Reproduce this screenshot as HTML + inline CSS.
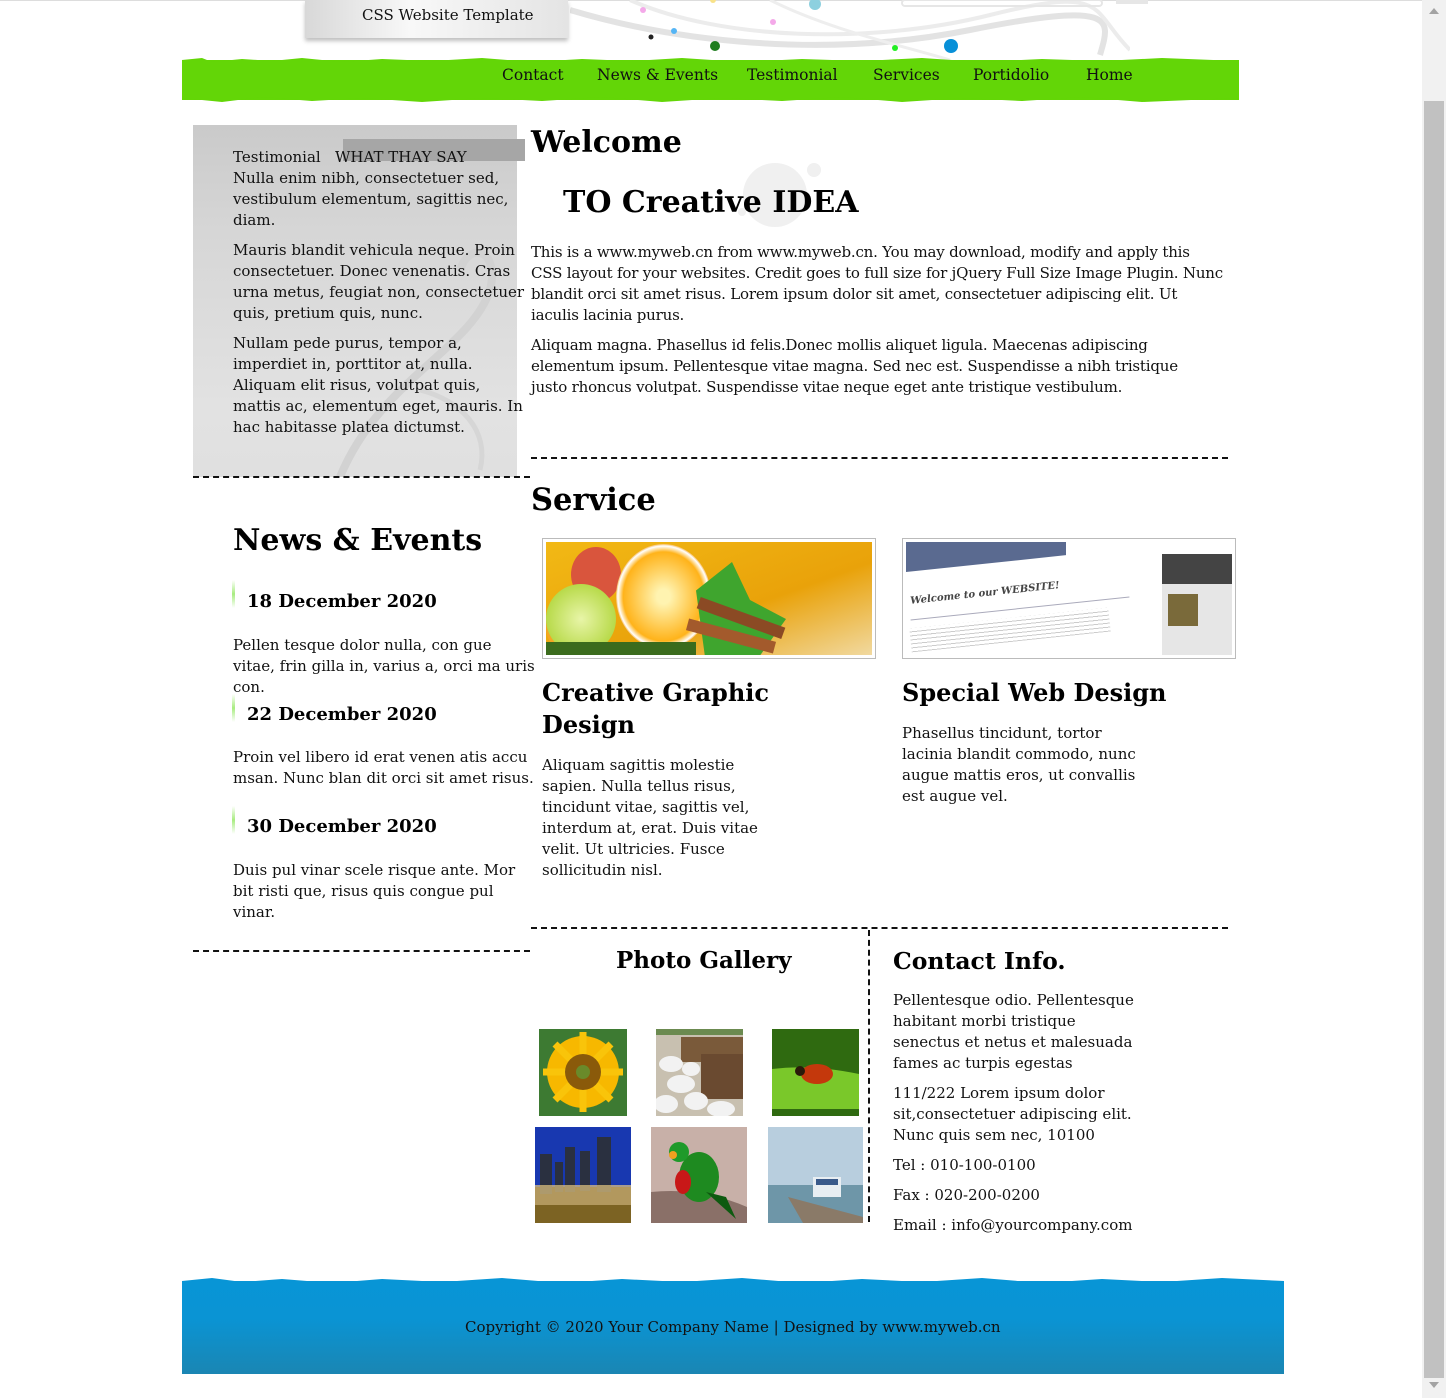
<!DOCTYPE html>
<html><head><meta charset="utf-8">
<style>
*{margin:0;padding:0;box-sizing:border-box}
html,body{width:1446px;height:1398px;overflow:hidden;background:#fff}
body{position:relative;font-family:"DejaVu Serif","Liberation Serif",serif;font-size:15px;line-height:21px;color:#111}
.a{position:absolute;white-space:nowrap}
.p{margin-bottom:9px}
h1,h2,h3{font-weight:bold;color:#000}
.dh{position:absolute;height:0;border-top:2px dashed #111}
.nav span{position:absolute;top:64px;font-size:15.5px;line-height:22px;color:#111}
</style></head><body>

<div class="a" style="left:0;top:0;width:1422px;height:1px;background:#ddd"></div>
<svg class="a" style="left:570px;top:0" width="560" height="60">
<path d="M0 10 C100 40 250 60 400 30 S540 20 530 55" stroke="#e3e3e3" stroke-width="6" fill="none"/>
<path d="M60 0 C150 40 300 45 420 15 S520 10 560 50" stroke="#ececec" stroke-width="4" fill="none"/>
<path d="M200 0 C260 30 330 45 380 60" stroke="#eee" stroke-width="3" fill="none"/>
<rect x="332" y="0" width="200" height="6" rx="3" fill="none" stroke="#e6e6e6" stroke-width="2"/>
<circle cx="73" cy="10" r="3" fill="#f4a9e9"/><circle cx="104" cy="31" r="3" fill="#55b5f5"/>
<circle cx="81" cy="37" r="2.5" fill="#222"/><circle cx="145" cy="46" r="5" fill="#1e7d1e"/>
<circle cx="203" cy="22" r="3" fill="#f4a9e9"/><circle cx="245" cy="4" r="6" fill="#8dd0df"/>
<circle cx="325" cy="48" r="3" fill="#22ee22"/><circle cx="381" cy="46" r="7" fill="#0890d8"/>
<circle cx="143" cy="0" r="3" fill="#f8e28a"/>
</svg>
<div class="a" style="left:1116px;top:0;width:32px;height:4px;background:#e6e6e6"></div>
<div class="a" style="left:305px;top:0;width:263px;height:38px;background:linear-gradient(90deg,#d8d8d8,#f8f8f8 40%,#e4e4e4);box-shadow:0 3px 4px rgba(0,0,0,.25)"></div>
<div class="a" style="left:362px;top:5px;font-size:15px;color:#111">CSS Website Template</div>

<div class="a" style="left:182px;top:60px;width:1057px;height:40px;background:#63d607"></div>
<svg class="a" style="left:182px;top:56px" width="1057" height="48">
<path d="M0 4 L20 2 L30 6 L60 3 L90 5 L120 2 L160 6 L200 3 L250 5 L300 2 L350 6 L400 3 L450 5 L500 2 L560 6 L620 3 L680 5 L740 2 L800 6 L860 3 L920 5 L980 2 L1057 5 L1057 6 L0 6Z" fill="#63d607"/>
<path d="M0 42 L40 46 L80 41 L130 45 L180 42 L240 46 L300 42 L360 45 L420 41 L480 46 L540 42 L600 45 L660 41 L720 46 L780 42 L840 45 L900 41 L960 46 L1057 42 L1057 40 L0 40Z" fill="#63d607"/>
</svg>
<div class="nav">
<span style="left:502px">Contact</span><span style="left:597px">News &amp; Events</span><span style="left:747px">Testimonial</span><span style="left:873px">Services</span><span style="left:973px">Portidolio</span><span style="left:1086px">Home</span>
</div>

<div class="a" style="left:193px;top:125px;width:324px;height:352px;background:linear-gradient(180deg,#cacaca 0,#d6d6d6 30%,#e2e2e2 80%,#e0e0e0)"></div>
<svg class="a" style="left:320px;top:230px" width="200" height="247"><path d="M20 247 C60 150 150 120 170 60 C180 20 150 10 140 40" stroke="#d2d2d2" stroke-width="8" fill="none"/><path d="M100 160 C140 170 170 200 160 240" stroke="#d6d6d6" stroke-width="5" fill="none"/></svg>
<div class="a" style="left:343px;top:139px;width:182px;height:22px;background:#a6a6a6"></div>
<div class="a" style="left:233px;top:147px">
<div>Testimonial&nbsp;&nbsp; WHAT THAY SAY</div>
<div class="p">Nulla enim nibh, consectetuer sed,<br>vestibulum elementum, sagittis nec,<br>diam.</div>
<div class="p">Mauris blandit vehicula neque. Proin<br>consectetuer. Donec venenatis. Cras<br>urna metus, feugiat non, consectetuer<br>quis, pretium quis, nunc.</div>
<div>Nullam pede purus, tempor a,<br>imperdiet in, porttitor at, nulla.<br>Aliquam elit risus, volutpat quis,<br>mattis ac, elementum eget, mauris. In<br>hac habitasse platea dictumst.</div>
</div>
<div class="dh" style="left:193px;top:476px;width:337px"></div>

<h2 class="a" style="left:233px;top:521px;font-size:30px;line-height:40px">News &amp; Events</h2>
<div class="a" style="left:232px;top:580px;width:3px;height:28px;background:linear-gradient(#fff,#a8ec80,#fff)"></div>
<h3 class="a" style="left:247px;top:590px;font-size:18px;line-height:24px">18 December 2020</h3>
<div class="a" style="left:233px;top:635px">Pellen tesque dolor nulla, con gue<br>vitae, frin gilla in, varius a, orci ma uris<br>con.</div>
<div class="a" style="left:232px;top:694px;width:3px;height:28px;background:linear-gradient(#fff,#a8ec80,#fff)"></div>
<h3 class="a" style="left:247px;top:703px;font-size:18px;line-height:24px">22 December 2020</h3>
<div class="a" style="left:233px;top:747px">Proin vel libero id erat venen atis accu<br>msan. Nunc blan dit orci sit amet risus.</div>
<div class="a" style="left:232px;top:806px;width:3px;height:28px;background:linear-gradient(#fff,#a8ec80,#fff)"></div>
<h3 class="a" style="left:247px;top:815px;font-size:18px;line-height:24px">30 December 2020</h3>
<div class="a" style="left:233px;top:860px">Duis pul vinar scele risque ante. Mor<br>bit risti que, risus quis congue pul<br>vinar.</div>
<div class="dh" style="left:193px;top:950px;width:337px"></div>

<svg class="a" style="left:720px;top:150px" width="110" height="80"><circle cx="55" cy="45" r="32" fill="#f0f0f0"/><circle cx="94" cy="20" r="7" fill="#f0f0f0"/><circle cx="22" cy="62" r="4" fill="#f0f0f0"/></svg>
<h1 class="a" style="left:531px;top:123px;font-size:30px;line-height:40px">Welcome</h1>
<h1 class="a" style="left:563px;top:183px;font-size:30px;line-height:40px">TO Creative IDEA</h1>
<div class="a" style="left:531px;top:242px;letter-spacing:-0.2px">
<div class="p">This is a www.myweb.cn from www.myweb.cn. You may download, modify and apply this<br>CSS layout for your websites. Credit goes to full size for jQuery Full Size Image Plugin. Nunc<br>blandit orci sit amet risus. Lorem ipsum dolor sit amet, consectetuer adipiscing elit. Ut<br>iaculis lacinia purus.</div>
<div>Aliquam magna. Phasellus id felis.Donec mollis aliquet ligula. Maecenas adipiscing<br>elementum ipsum. Pellentesque vitae magna. Sed nec est. Suspendisse a nibh tristique<br>justo rhoncus volutpat. Suspendisse vitae neque eget ante tristique vestibulum.</div>
</div>
<div class="dh" style="left:531px;top:457px;width:697px"></div>

<h1 class="a" style="left:531px;top:480px;font-size:30.5px;line-height:40px">Service</h1>
<div class="a" style="left:542px;top:538px;width:334px;height:121px;border:1px solid #bbb;padding:3px;background:#fff">
<div style="position:relative;width:100%;height:100%;overflow:hidden;background:linear-gradient(160deg,#f2b915,#e9a20a 60%,#f1d9a0)">
<div style="position:absolute;left:0;top:55px;width:60px;height:60px;border-radius:50%;background:#f5a623"></div>
<div style="position:absolute;left:25px;top:5px;width:50px;height:55px;border-radius:50%;background:#d9553d"></div>
<div style="position:absolute;left:0px;top:42px;width:70px;height:70px;border-radius:50%;background:radial-gradient(#e8f5a8,#b8da4a 70%,#6f9d1f)"></div>
<div style="position:absolute;left:70px;top:2px;width:95px;height:105px;border-radius:50%;background:radial-gradient(#fff3b0 10%,#ffb31a 60%,#fff 68%,#f39c12 72%)"></div>
<div style="position:absolute;left:150px;top:20px;width:90px;height:95px;background:#3fa52e;clip-path:polygon(0 30%,40% 0,60% 40%,100% 60%,70% 100%,10% 100%)"></div>
<div style="position:absolute;left:150px;top:70px;width:90px;height:12px;background:#8b4a24;transform:rotate(20deg)"></div>
<div style="position:absolute;left:140px;top:88px;width:90px;height:12px;background:#a35a2c;transform:rotate(15deg)"></div>
<div style="position:absolute;left:0;top:100px;width:150px;height:20px;background:#3b6b1d"></div>
</div></div>
<div class="a" style="left:902px;top:538px;width:334px;height:121px;border:1px solid #bbb;padding:3px;background:#fff">
<div style="position:relative;width:100%;height:100%;overflow:hidden;background:#fff">
<div style="position:absolute;left:0;top:0;width:160px;height:30px;background:#5a6a90;transform:skewY(-6deg);transform-origin:0 0"></div>
<div style="position:absolute;left:4px;top:46px;font:italic bold 10px 'DejaVu Serif',serif;color:#444;transform:rotate(-6deg)">Welcome to our WEBSITE!</div>
<div style="position:absolute;left:4px;top:66px;width:220px;height:1px;background:#aab;transform:rotate(-6deg)"></div>
<div style="position:absolute;left:4px;top:76px;width:200px;height:24px;background:repeating-linear-gradient(#fff 0 3px,#ccc 3px 4px);transform:rotate(-6deg)"></div>
<div style="position:absolute;left:256px;top:12px;width:80px;height:30px;background:#444"></div>
<div style="position:absolute;left:256px;top:42px;width:80px;height:75px;background:#e6e6e6"></div>
<div style="position:absolute;left:262px;top:52px;width:30px;height:32px;background:#7a6a3a"></div>
</div></div>
<h2 class="a" style="left:542px;top:677px;font-size:24px;line-height:32px">Creative Graphic<br>Design</h2>
<div class="a" style="left:542px;top:755px">Aliquam sagittis molestie<br>sapien. Nulla tellus risus,<br>tincidunt vitae, sagittis vel,<br>interdum at, erat. Duis vitae<br>velit. Ut ultricies. Fusce<br>sollicitudin nisl.</div>
<h2 class="a" style="left:902px;top:677px;font-size:24px;line-height:32px">Special Web Design</h2>
<div class="a" style="left:902px;top:723px">Phasellus tincidunt, tortor<br>lacinia blandit commodo, nunc<br>augue mattis eros, ut convallis<br>est augue vel.</div>
<div class="dh" style="left:531px;top:927px;width:697px"></div>

<div class="a" style="left:868px;top:930px;width:0;height:292px;border-left:2px dashed #111"></div>
<h2 class="a" style="left:616px;top:945px;font-size:23px;line-height:32px">Photo Gallery</h2>
<svg class="a" style="left:539px;top:1029px" width="88" height="87"><rect width="88" height="87" fill="#3d7a32"/><g fill="#f7b800"><circle cx="44" cy="43" r="36"/></g><g stroke="#f9c40a" stroke-width="7"><path d="M44 3V83M4 43H84M16 15L72 71M72 15L16 71"/></g><circle cx="44" cy="43" r="18" fill="#8a5a0a"/><circle cx="44" cy="43" r="7" fill="#6a8a2a"/></svg>
<svg class="a" style="left:656px;top:1029px" width="87" height="87"><rect width="87" height="87" fill="#c8c0b0"/><rect x="25" y="8" width="62" height="25" fill="#7a5a3a"/><rect x="45" y="25" width="42" height="45" fill="#6a4a30"/><g fill="#f2f2f2"><ellipse cx="15" cy="35" rx="12" ry="8"/><ellipse cx="25" cy="55" rx="14" ry="9"/><ellipse cx="10" cy="75" rx="12" ry="9"/><ellipse cx="40" cy="72" rx="12" ry="9"/><ellipse cx="65" cy="80" rx="14" ry="8"/><ellipse cx="35" cy="40" rx="9" ry="7"/></g><rect width="87" height="6" fill="#6b8a50"/></svg>
<svg class="a" style="left:772px;top:1029px" width="87" height="87"><rect width="87" height="87" fill="#2f6a10"/><path d="M0 40 Q40 35 87 45 V80 H0Z" fill="#7ac82a"/><ellipse cx="45" cy="45" rx="16" ry="10" fill="#c4380c"/><circle cx="28" cy="42" r="5" fill="#2a1a0a"/></svg>
<svg class="a" style="left:535px;top:1127px" width="96" height="96"><rect width="96" height="96" fill="#1838b0"/><rect y="60" width="96" height="36" fill="#3a2a10"/><g fill="#2a3040"><rect x="5" y="27" width="12" height="40"/><rect x="30" y="20" width="10" height="45"/><rect x="45" y="24" width="10" height="40"/><rect x="62" y="10" width="14" height="55"/><rect x="20" y="35" width="8" height="30"/></g><rect y="58" width="96" height="20" fill="#e6c880" opacity=".7"/><rect y="78" width="96" height="18" fill="#a88a30" opacity=".6"/></svg>
<svg class="a" style="left:651px;top:1127px" width="96" height="96"><rect width="96" height="96" fill="#c8b0a8"/><path d="M0 65 Q50 60 96 80 V96 H0Z" fill="#8a7068"/><ellipse cx="48" cy="50" rx="20" ry="25" fill="#1e8a20"/><circle cx="28" cy="25" r="10" fill="#1e9a2a"/><circle cx="22" cy="28" r="4" fill="#f0a020"/><ellipse cx="32" cy="55" rx="8" ry="12" fill="#c81818"/><path d="M55 65 L85 92 L75 70Z" fill="#0e5a10"/></svg>
<svg class="a" style="left:768px;top:1127px" width="95" height="96"><rect width="95" height="96" fill="#b8cede"/><rect y="58" width="95" height="38" fill="#6e96a8"/><path d="M20 70 L95 90 V96 H35Z" fill="#8a7a68"/><rect x="45" y="50" width="28" height="20" fill="#e8eef2"/><rect x="48" y="52" width="22" height="6" fill="#3a5a8a"/></svg>

<h2 class="a" style="left:893px;top:945px;font-size:23.5px;line-height:32px">Contact Info.</h2>
<div class="a" style="left:893px;top:990px">
<div class="p">Pellentesque odio. Pellentesque<br>habitant morbi tristique<br>senectus et netus et malesuada<br>fames ac turpis egestas</div>
<div class="p">111/222 Lorem ipsum dolor<br>sit,consectetuer adipiscing elit.<br>Nunc quis sem nec, 10100</div>
<div class="p">Tel : 010-100-0100</div>
<div class="p">Fax : 020-200-0200</div>
<div>Email : info@yourcompany.com</div>
</div>

<div class="a" style="left:182px;top:1281px;width:1102px;height:93px;background:linear-gradient(#0895d6,#0a94d4 40%,#1a86b3)"></div>
<svg class="a" style="left:182px;top:1277px" width="1102" height="10"><path d="M0 4 L30 1 L60 5 L100 2 L150 6 L200 2 L260 5 L320 1 L380 6 L440 2 L500 5 L560 1 L620 6 L680 2 L740 5 L800 1 L860 6 L920 2 L980 5 L1040 1 L1102 4 V10 H0Z" fill="#0895d6"/></svg>
<div class="a" style="left:465px;top:1317px;color:#111">Copyright © 2020 Your Company Name | Designed by www.myweb.cn</div>

<div class="a" style="left:1422px;top:0;width:24px;height:1398px;background:#f1f1f1"></div>
<div class="a" style="left:1424px;top:101px;width:20px;height:1277px;background:#c1c1c1"></div>
<div class="a" style="left:1429px;top:1382px;width:0;height:0;border-left:5px solid transparent;border-right:5px solid transparent;border-top:6px solid #a3a3a3"></div>
<div class="a" style="left:1429px;top:8px;width:0;height:0;border-left:5px solid transparent;border-right:5px solid transparent;border-bottom:6px solid #a3a3a3"></div>
</body></html>
